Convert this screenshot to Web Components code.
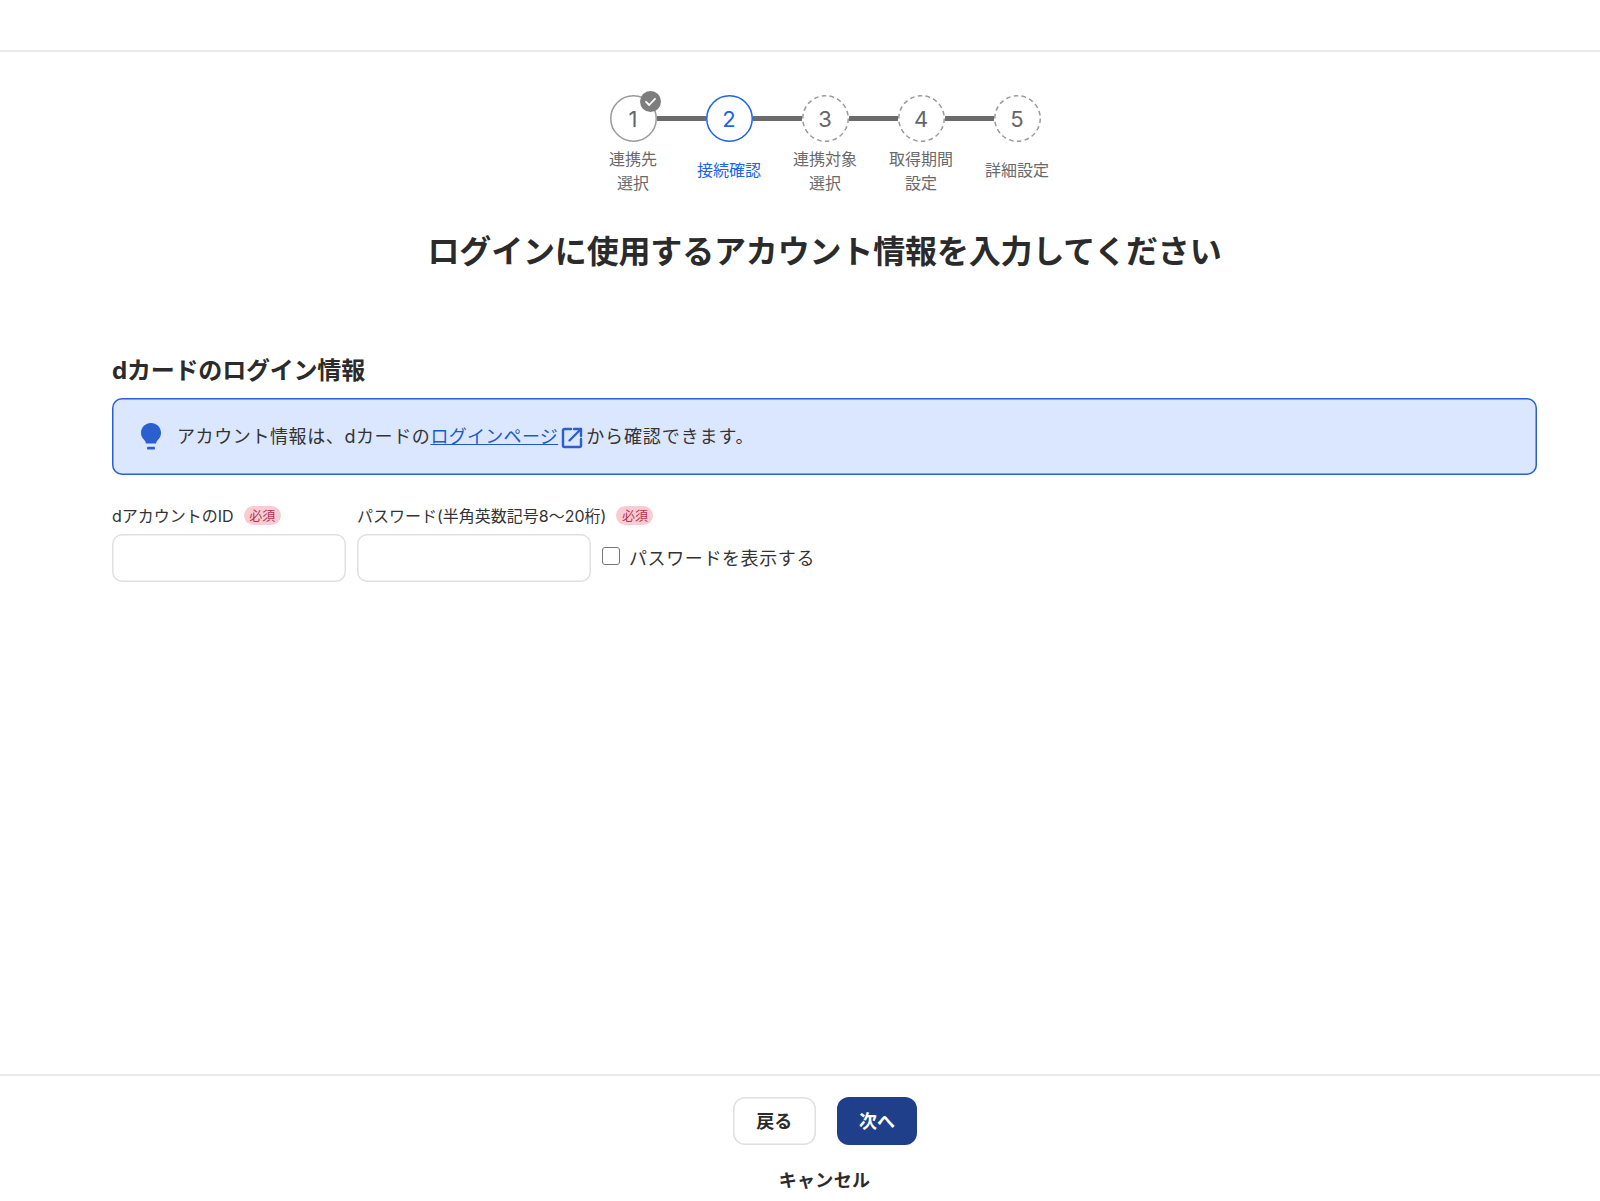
<!DOCTYPE html>
<html lang="ja">
<head>
<meta charset="utf-8">
<title>連携</title>
<style>
  html, body { margin: 0; padding: 0; background: #fff; }
  body { font-family: Inter, "Noto Sans CJK JP", sans-serif; color: #2b2b2b; }
</style>
</head>
<body>
<link-page>
  <step-bar>
    <step-item num="1" state="done" first>連携先<br>選択</step-item>
    <step-item num="2" state="current" short>接続確認</step-item>
    <step-item num="3">連携対象<br>選択</step-item>
    <step-item num="4">取得期間<br>設定</step-item>
    <step-item num="5" last short>詳細設定</step-item>
  </step-bar>
  <page-title>ログインに使用するアカウント情報を入力してください</page-title>
  <login-form></login-form>
  <form-footer slot="footer"></form-footer>
</link-page>

<script>
class LinkPage extends HTMLElement {
  constructor() {
    super();
    this.attachShadow({ mode: "open" });
    this.shadowRoot.innerHTML = `
      <style>
        :host { display: flex; flex-direction: column; height: 1201px; overflow: hidden; }
        header { height: 50px; border-bottom: 2px solid #e9ebeb; flex: none; }
        main { flex: 1; padding: 43px 63px 0 112px; }
      </style>
      <header></header>
      <main><slot></slot></main>
      <slot name="footer"></slot>
    `;
  }
}
customElements.define("link-page", LinkPage);

class StepBar extends HTMLElement {
  constructor() {
    super();
    this.attachShadow({ mode: "open" });
    this.shadowRoot.innerHTML = `
      <style>
        :host { display: flex; justify-content: center; margin-left: 1px; }
      </style>
      <slot></slot>
    `;
  }
}
customElements.define("step-bar", StepBar);

class StepItem extends HTMLElement {
  constructor() {
    super();
    this.attachShadow({ mode: "open" });
  }

  connectedCallback() {
    const num = this.getAttribute("num") || "";
    const state = this.getAttribute("state") || "todo";
    const first = this.hasAttribute("first");
    const last = this.hasAttribute("last");
    const short = this.hasAttribute("short");
    const ringColor = state === "current" ? "#1a62f0" : "#9a9a9a";
    const dash = state === "todo" ? `stroke-dasharray="4.6 3.3"` : "";

    this.shadowRoot.innerHTML = `
      <style>
        :host { display: block; width: 96px; }
        .track { display: flex; align-items: center; height: 47px; }
        .line { flex: 1; height: 5px; background: #6b6b6b; }
        .line.none { background: transparent; }
        .circle {
          position: relative;
          width: 47px;
          height: 47px;
          flex: none;
          border-radius: 50%;
          display: flex;
          align-items: center;
          justify-content: center;
          font-size: 22px;
          color: #666;
          background: #fff;
        }
        .ring { position: absolute; inset: 0; width: 47px; height: 47px; }
        .num { position: relative; }
        .current .circle { color: #1a62f0; }
        .check { position: absolute; top: -4px; right: -4px; width: 21px; height: 21px; }
        .label {
          box-sizing: border-box;
          height: 48px;
          margin-top: 5px;
          display: flex;
          align-items: center;
          justify-content: center;
          text-align: center;
          font-size: 16px;
          line-height: 24px;
          color: #6a6a6a;
          white-space: nowrap;
        }
        .label.short { padding-bottom: 2px; }
        .current .label { color: #1a62f0; }
      </style>
      <div class="${state}">
        <div class="track">
          <span class="line ${first ? "none" : ""}"></span>
          <div class="circle">
            <svg class="ring" viewBox="0 0 47 47"><circle cx="23.5" cy="23.5" r="22.75" fill="none" stroke="${ringColor}" stroke-width="1.5" ${dash}/></svg>
            <span class="num">${num}</span>${
            state === "done"
              ? `<svg class="check" viewBox="0 0 21 21"><circle cx="10.5" cy="10.5" r="10.5" fill="#7d7d7d"/><path d="M6 10.8l3.2 3.2L15 7.8" fill="none" stroke="#fff" stroke-width="1.8" stroke-linecap="round" stroke-linejoin="round"/></svg>`
              : ""
          }</div>
          <span class="line ${last ? "none" : ""}"></span>
        </div>
        <div class="label ${short ? "short" : ""}"><div><slot></slot></div></div>
      </div>
    `;
  }
}
customElements.define("step-item", StepItem);

class PageTitle extends HTMLElement {
  constructor() {
    super();
    this.attachShadow({ mode: "open" });
    this.shadowRoot.innerHTML = `
      <style>
        :host {
          display: block;
          margin-top: 33px;
          text-align: center;
          font-size: 32px;
          line-height: 48px;
          font-weight: 700;
          letter-spacing: -0.16px;
          color: #2b2b2b;
        }
      </style>
      <slot></slot>
    `;
  }
}
customElements.define("page-title", PageTitle);

class RequiredBadge extends HTMLElement {
  constructor() {
    super();
    this.attachShadow({ mode: "open" });
    this.shadowRoot.innerHTML = `
      <style>
        :host {
          display: inline-block;
          flex: none;
          width: 37px;
          height: 19px;
          line-height: 18px;
          border-radius: 10px;
          background: #f9ccd4;
          color: #b8324e;
          font-size: 13px;
          text-align: center;
        }
      </style>
      必須
    `;
  }
}
customElements.define("required-badge", RequiredBadge);

class TextField extends HTMLElement {
  constructor() {
    super();
    this.attachShadow({ mode: "open" });
  }

  connectedCallback() {
    const label = this.getAttribute("label") || "";
    this.shadowRoot.innerHTML = `
      <style>
        :host { display: block; width: 234px; }
        .head {
          display: flex;
          align-items: center;
          gap: 10px;
          height: 26px;
          margin-bottom: 6px;
          font-size: 16px;
          white-space: nowrap;
          color: #333;
        }
        input {
          display: block;
          box-sizing: border-box;
          width: 234px;
          height: 48px;
          border: none;
          box-shadow: inset 0 0 0 1.5px #e0e0e0;
          border-radius: 10px;
          background: #fff;
          outline: none;
        }
      </style>
      <div class="head"><span>${label}</span><required-badge></required-badge></div>
      <input type="${this.getAttribute("type") || "text"}">
    `;
  }
}
customElements.define("text-field", TextField);

class LoginForm extends HTMLElement {
  constructor() {
    super();
    this.attachShadow({ mode: "open" });
    this.shadowRoot.innerHTML = `
      <style>
        :host { display: block; margin-top: 77px; }
        h2 {
          margin: 0 0 9px;
          font-size: 24px;
          line-height: 36px;
          font-weight: 700;
          letter-spacing: -0.2px;
          color: #2b2b2b;
        }
        .info {
          box-sizing: border-box;
          height: 77px;
          display: flex;
          align-items: center;
          gap: 16px;
          padding: 0 0 2px 29px;
          box-shadow: inset 0 0 0 1.5px #2a5fcf;
          border-radius: 10px;
          background: #dbe7fe;
          font-size: 18px;
          color: #333;
        }
        .bulb { width: 20px; height: 27px; flex: none; margin-top: 2px; }
        .a { letter-spacing: 0.6px; }
        a { color: #1c5ac9; text-decoration: underline; letter-spacing: 0.3px; }
        .b { letter-spacing: 0.9px; }
        .ext { width: 24px; height: 24px; vertical-align: -7px; margin: 0 2.5px 0 1.5px; }
        .row {
          display: flex;
          align-items: flex-end;
          gap: 11px;
          margin-top: 27px;
        }
        .show {
          display: flex;
          align-items: center;
          height: 48px;
          padding-bottom: 3px;
          box-sizing: border-box;
          font-size: 18px;
          letter-spacing: 0.6px;
          color: #333;
          white-space: nowrap;
        }
        .show input {
          width: 18px;
          height: 18px;
          margin: 0 9px 2px 0;
          appearance: none;
          box-sizing: border-box;
          border: 1.5px solid #767676;
          border-radius: 3px;
          background: #fff;
        }
      </style>
      <h2>dカードのログイン情報</h2>
      <div class="info">
        <svg class="bulb" viewBox="0 0 20 27">
          <path d="M10 0C4.400 0 0 4.300 0 9.700c0 3.100 1.400 5.500 3.200 7.300 1 1 1.500 2 1.700 3.500h10.200c.2-1.500.7-2.500 1.700-3.500C18.600 15.200 20 12.800 20 9.700 20 4.300 15.600 0 10 0z" fill="#2a5fcf"/>
          <rect x="6" y="23.800" width="8" height="2.600" rx="1" fill="#2a5fcf"/>
        </svg>
        <span><span class="a">アカウント情報は、dカードの</span><a href="#">ログインページ</a><svg class="ext" viewBox="0 0 24 24" fill="none" stroke="#2a5fcf" stroke-width="2.400" stroke-linecap="round" stroke-linejoin="round"><path d="M11 3H4.500A1.500 1.500 0 0 0 3 4.500v15A1.500 1.500 0 0 0 4.500 21h15a1.500 1.500 0 0 0 1.500-1.500V13"/><path d="M14 3h7v7"/><path d="M21 3L9.500 14.500"/></svg><span class="b">から確認できます。</span></span>
      </div>
      <div class="row">
        <text-field label="dアカウントのID"></text-field>
        <text-field label="パスワード(半角英数記号8〜20桁)" type="password"></text-field>
        <label class="show"><input type="checkbox">パスワードを表示する</label>
      </div>
    `;
  }
}
customElements.define("login-form", LoginForm);

class FormFooter extends HTMLElement {
  constructor() {
    super();
    this.attachShadow({ mode: "open" });
    this.shadowRoot.innerHTML = `
      <style>
        :host {
          display: block;
          flex: none;
          box-sizing: border-box;
          height: 127px;
          padding: 21px 63px 0 113px;
          border-top: 2px solid #e9ebeb;
        }
        .btns { display: flex; justify-content: center; gap: 21.5px; }
        button {
          box-sizing: border-box;
          height: 48px;
          border: none;
          border-radius: 12px;
          font: 700 18px Inter, "Noto Sans CJK JP", sans-serif;
          padding: 0 0 2px;
        }
        .back { width: 82.5px; background: #fff; box-shadow: inset 0 0 0 1.5px #e0e0e0; color: #2b2b2b; }
        .next { width: 80px; background: #1f3f8a; color: #fff; }
        .cancel {
          margin-top: 22px;
          margin-left: -1px;
          text-align: center;
          font-size: 18px;
          line-height: 27px;
          font-weight: 700;
          letter-spacing: 0.3px;
          color: #2b2b2b;
        }
      </style>
      <div class="btns">
        <button class="back">戻る</button>
        <button class="next">次へ</button>
      </div>
      <div class="cancel">キャンセル</div>
    `;
  }
}
customElements.define("form-footer", FormFooter);
</script>
</body>
</html>
